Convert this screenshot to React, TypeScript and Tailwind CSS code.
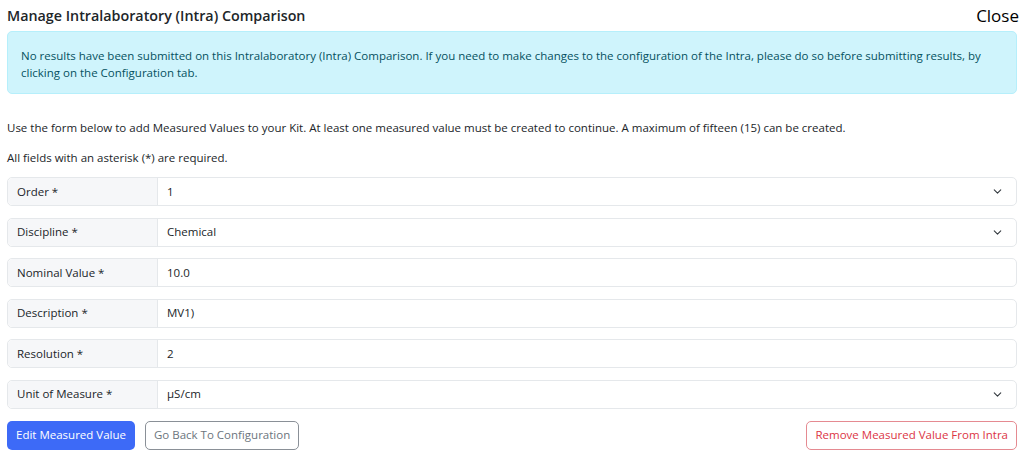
import { ChevronDown } from "lucide-react";

type Field = { label: string; value: string; select?: boolean };

const fields: Field[] = [
  { label: "Order *", value: "1", select: true },
  { label: "Discipline *", value: "Chemical", select: true },
  { label: "Nominal Value *", value: "10.0" },
  { label: "Description *", value: "MV1)" },
  { label: "Resolution *", value: "2" },
  { label: "Unit of Measure *", value: "µS/cm", select: true },
];

function FieldRow({ field }: { field: Field }) {
  return (
    <div className="flex h-[29px] rounded-[5px] border border-[#e5e8eb] text-[11.5px] text-[#212529]">
      <div className="flex w-[150px] shrink-0 items-center rounded-l-[5px] border-r border-[#e5e8eb] bg-[#f6f7f9] pl-[9px]">
        {field.label}
      </div>
      <div className="flex flex-1 items-center justify-between pl-[9px] pr-[12px]">
        <span>{field.value}</span>
        {field.select && <ChevronDown size={13} strokeWidth={2} className="text-[#343a40]" />}
      </div>
    </div>
  );
}

export default function App() {
  return (
    <div className="min-h-screen bg-white px-[7px] pt-[5px] font-['Open_Sans',sans-serif] text-[#212529]">
      <div className="flex items-center justify-between">
        <h1 className="text-[14.3px] font-semibold leading-[22px]">Manage Intralaboratory (Intra) Comparison</h1>
        <button className="-mr-[2px] text-[17px] leading-[22px] text-black">Close</button>
      </div>

      <div className="mt-[4px] rounded-[5px] border border-[#b6effb] bg-[#cff4fc] px-[13px] pb-[12px] pt-[15px] text-[11.5px] leading-[17px] text-[#055160]">
        No results have been submitted on this Intralaboratory (Intra) Comparison. If you need to make changes to the
        configuration of the Intra, please do so before submitting results, by clicking on the Configuration tab.
      </div>

      <p className="mt-[25px] text-[11.5px] leading-[17px]">
        Use the form below to add Measured Values to your Kit. At least one measured value must be created to continue.
        A maximum of fifteen (15) can be created.
      </p>
      <p className="mt-[13px] text-[11.5px] leading-[17px]">All fields with an asterisk (*) are required.</p>

      <div className="mt-[11px] flex flex-col gap-[11.5px]">
        {fields.map((f) => (
          <FieldRow key={f.label} field={f} />
        ))}
      </div>

      <div className="mt-[12px] flex items-center">
        <button className="h-[29px] rounded-[5px] bg-[#3d6af7] px-[9px] text-[11.5px] text-white">
          Edit Measured Value
        </button>
        <button className="ml-[10px] h-[29px] rounded-[5px] border border-[#8a9097] px-[8px] text-[11.5px] text-[#6c757d]">
          Go Back To Configuration
        </button>
        <button className="ml-auto h-[29px] rounded-[5px] border border-[#e58a91] px-[8px] text-[11.5px] text-[#dc3545]">
          Remove Measured Value From Intra
        </button>
      </div>
    </div>
  );
}
